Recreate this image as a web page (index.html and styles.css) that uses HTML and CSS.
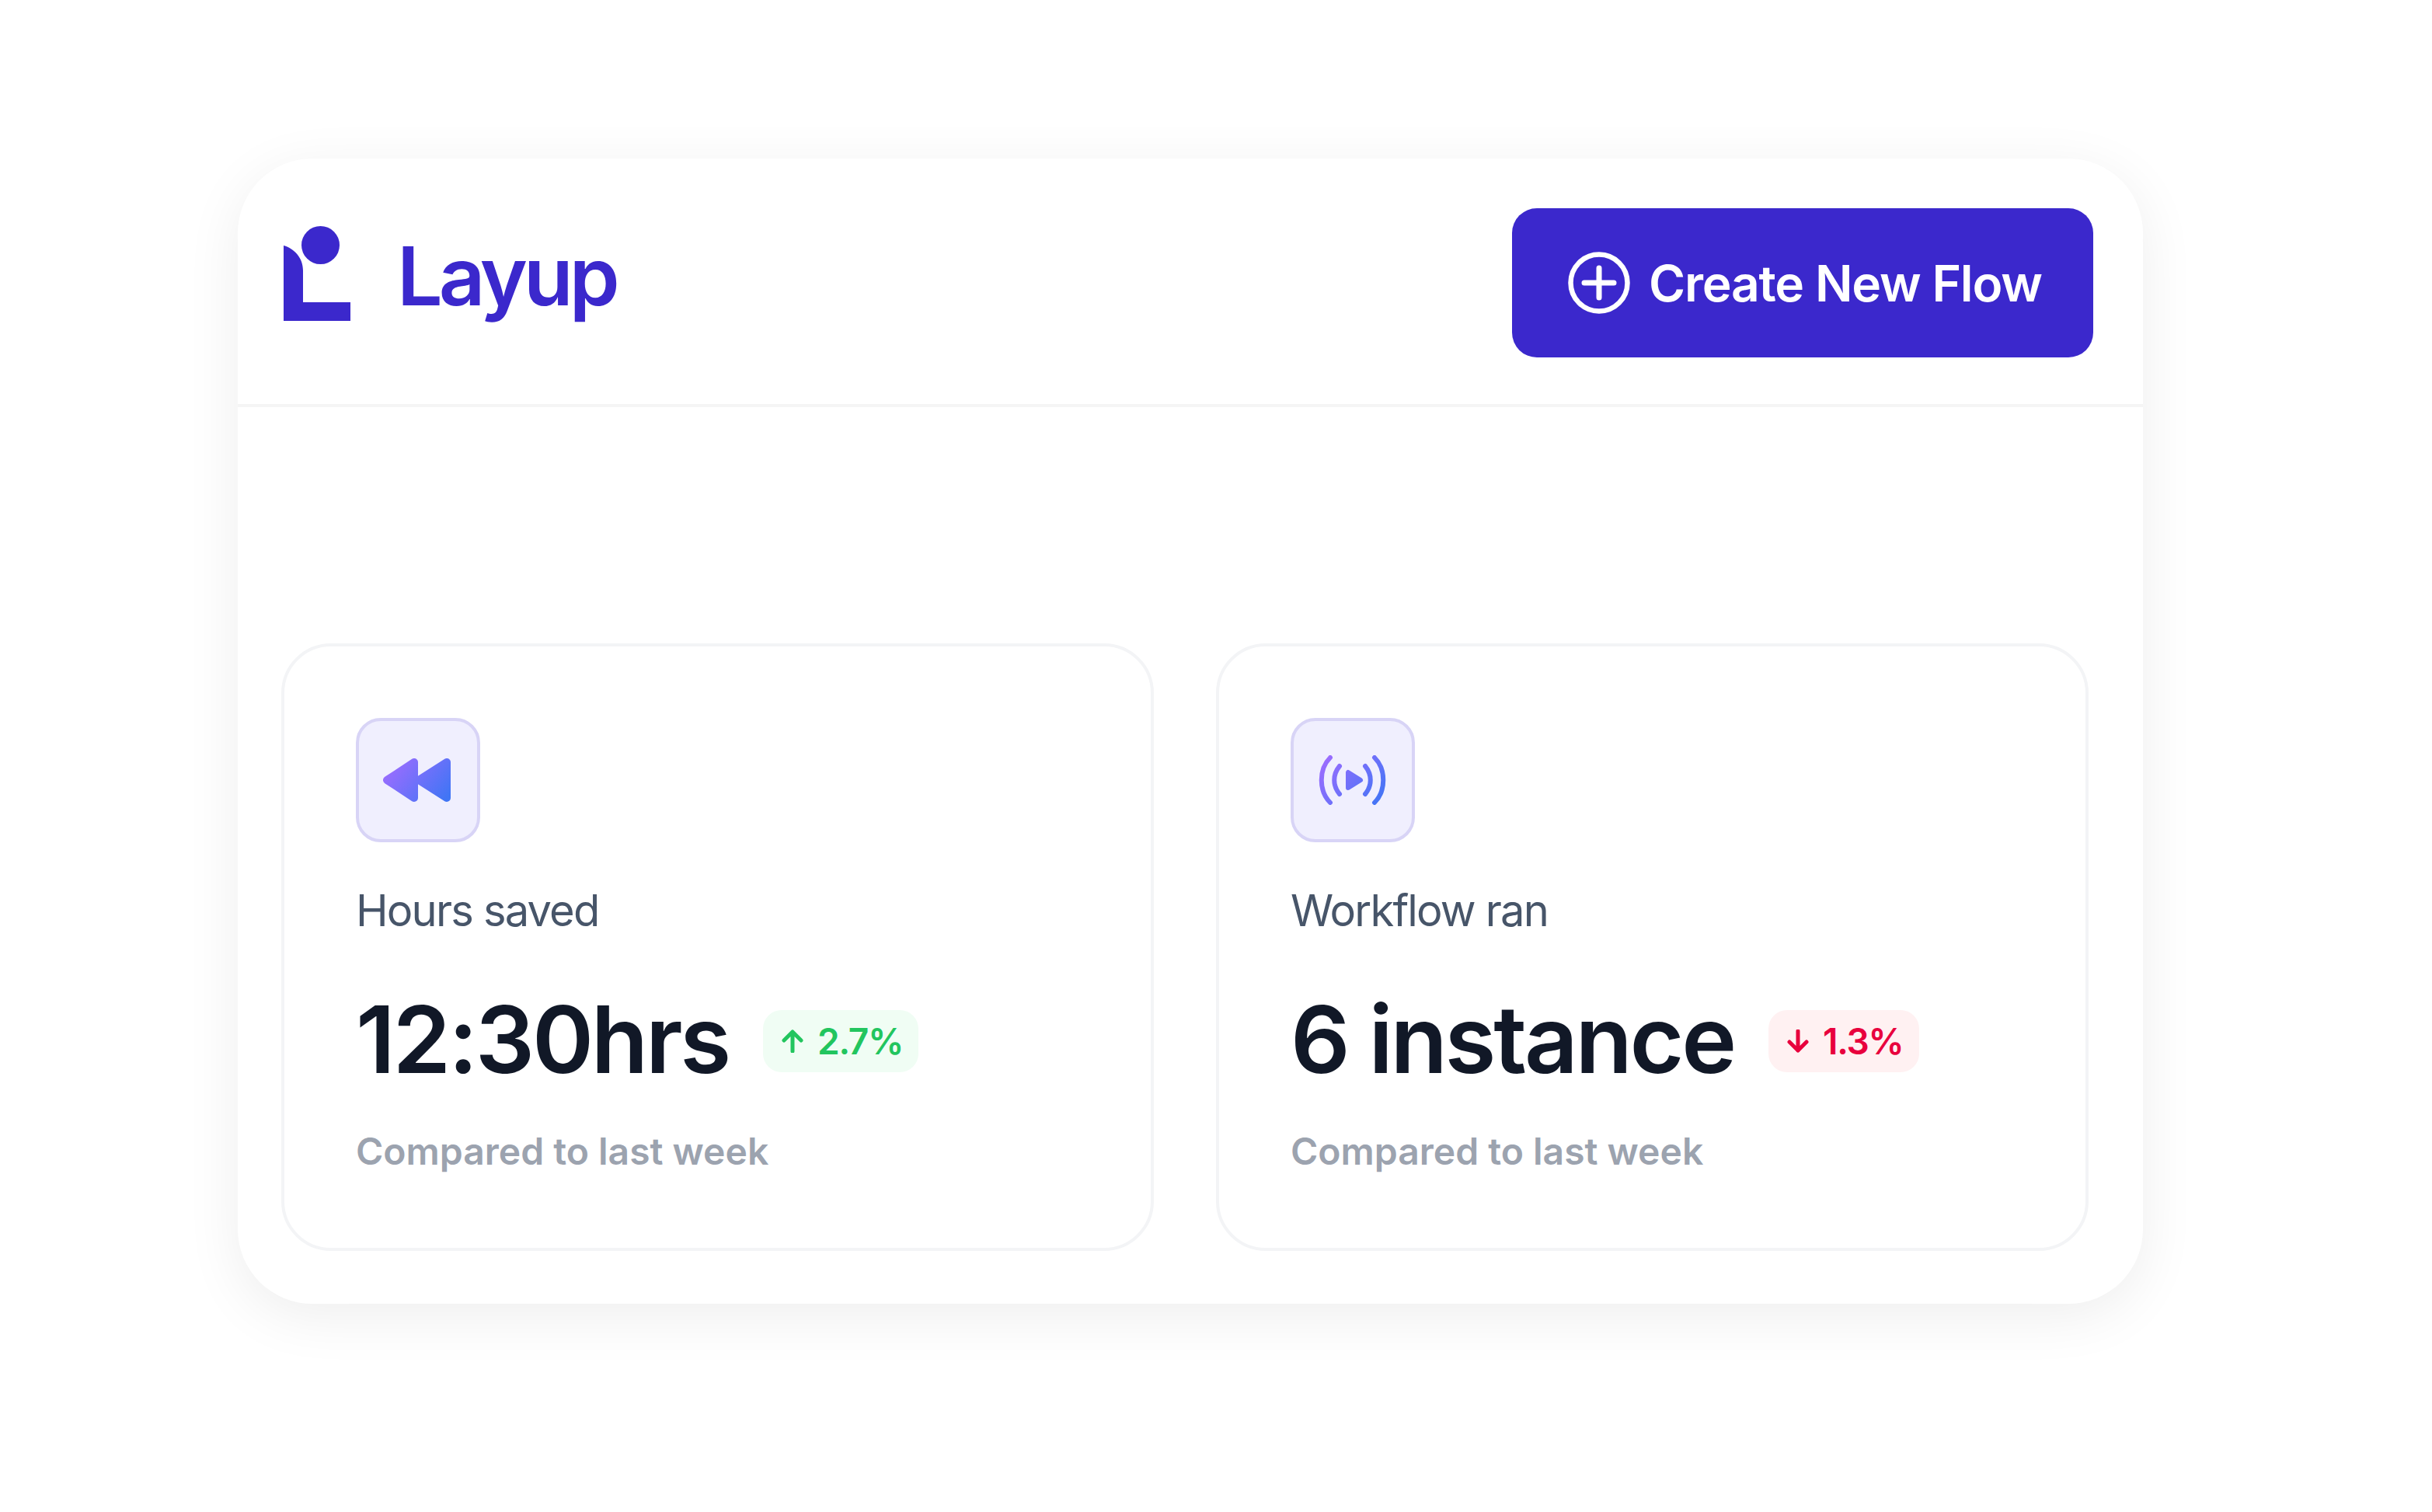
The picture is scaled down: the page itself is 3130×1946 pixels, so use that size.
FILE: index.html
```html
<!DOCTYPE html>
<html lang="en">

<head>
    <meta charset="UTF-8">
    <link rel="stylesheet" href="styles.css">
    <title>Layup</title>
</head>

<body>

    <div class="panel">
        <div class="panel-header">
            <div class="brand">
                <svg class="brand-logo" viewBox="0 0 86 122">
                    <path d="M0 25C14 29 25 41 25 57V98H86V122H0Z" fill="#3b28cc" />
                    <circle cx="47.5" cy="24.5" r="24.5" fill="#3b28cc" />
                </svg>
                <span class="brand-name">Layup</span>
            </div>
            <button class="create-btn">
                <svg class="create-icon" viewBox="0 0 80 80" fill="none" stroke="#fff">
                    <circle cx="40" cy="40" r="36.5" stroke-width="6.5" />
                    <path d="M40 21V59M21 40H59" stroke-width="7" stroke-linecap="round" />
                </svg>
                Create New Flow
            </button>
        </div>

        <div class="panel-body">
            <div class="stat-card">
                <div class="stat-icon">
                    <svg class="icon-rewind" viewBox="0 0 88 56">
                        <defs>
                            <linearGradient id="grad1" gradientUnits="userSpaceOnUse" x1="10" y1="0" x2="80" y2="56">
                                <stop offset="0" stop-color="#a06cff" />
                                <stop offset="1" stop-color="#4075f5" />
                            </linearGradient>
                        </defs>
                        <path d="M6 28L41 5V51ZM47 28L83 5V51Z" fill="url(#grad1)" stroke="url(#grad1)" stroke-width="10" stroke-linejoin="round" />
                    </svg>
                </div>
                <div class="stat-label">Hours saved</div>
                <div class="stat-row">
                    <span class="stat-value">12:30hrs</span>
                    <span class="badge badge-up">
                        <svg class="badge-arrow" viewBox="0 0 28 30" fill="none" stroke="#22c55e" stroke-width="5" stroke-linecap="round" stroke-linejoin="round">
                            <path d="M14 28V3M3 14L14 3L25 14" />
                        </svg>
                        2.7%
                    </span>
                </div>
                <div class="stat-note">Compared to last week</div>
            </div>

            <div class="stat-card">
                <div class="stat-icon">
                    <svg class="icon-live" viewBox="0 0 88 64" fill="none">
                        <defs>
                            <linearGradient id="grad2" gradientUnits="userSpaceOnUse" x1="6" y1="0" x2="80" y2="64">
                                <stop offset="0" stop-color="#a06cff" />
                                <stop offset="1" stop-color="#4075f5" />
                            </linearGradient>
                        </defs>
                        <path d="M15 3C0 18 0 46 15 61M72 3C87 18 87 46 72 61M27 14C18 25 18 39 27 50M60 14C69 25 69 39 60 50" stroke="url(#grad2)" stroke-width="6" stroke-linecap="round" />
                        <path d="M38 22V42L54 32Z" fill="url(#grad2)" stroke="url(#grad2)" stroke-width="6" stroke-linejoin="round" />
                    </svg>
                </div>
                <div class="stat-label">Workflow ran</div>
                <div class="stat-row">
                    <span class="stat-value">6 instance</span>
                    <span class="badge badge-down">
                        <svg class="badge-arrow" viewBox="0 0 28 30" fill="none" stroke="#e8003d" stroke-width="5" stroke-linecap="round" stroke-linejoin="round">
                            <path d="M14 2V27M3 16L14 27L25 16" />
                        </svg>
                        1.3%
                    </span>
                </div>
                <div class="stat-note">Compared to last week</div>
            </div>
        </div>
    </div>

</body>

</html>
```

FILE: styles.css
```css
body {
    font-family: 'Inter', sans-serif;
    background: #ffffff;
    margin: 0;
    padding: 204px 372px 268px 306px;
}

.panel {
    background: #ffffff;
    border-radius: 96px;
    box-shadow: 0 16px 72px rgba(0, 0, 0, 0.07);
}

.panel-header {
    display: flex;
    justify-content: space-between;
    align-items: flex-start;
    height: 316px;
    padding: 0 64px 0 59px;
    border-bottom: 4px solid #f5f5f5;
}

.brand {
    display: flex;
    align-items: flex-start;
    gap: 60px;
    margin-top: 87px;
}

.brand-logo {
    width: 86px;
    height: 122px;
}

.brand-name {
    margin-top: 3px;
    font-size: 104px;
    line-height: 122px;
    font-weight: 600;
    letter-spacing: -5px;
    color: #3b28cc;
}

.create-btn {
    display: flex;
    align-items: center;
    gap: 24px;
    width: 748px;
    height: 192px;
    margin-top: 64px;
    padding: 0 0 0 72px;
    border: none;
    border-radius: 32px;
    background-color: #3b28cc;
    color: #ffffff;
    font-family: inherit;
    font-size: 64px;
    font-weight: 600;
    letter-spacing: -1.2px;
}

.create-icon {
    width: 80px;
    height: 80px;
}

.panel-body {
    display: grid;
    grid-template-columns: 1fr 1fr;
    gap: 80px;
    padding: 304px 70px 68px 56px;
}

.stat-card {
    padding: 92px;
    border: 4px solid #f3f4f6;
    border-radius: 64px;
}

.stat-icon {
    display: flex;
    align-items: center;
    justify-content: center;
    box-sizing: border-box;
    width: 160px;
    height: 160px;
    border: 4px solid #d8d4f6;
    border-radius: 32px;
    background-color: #f0effe;
}

.icon-rewind {
    width: 88px;
    height: 56px;
    margin-right: 4px;
}

.icon-live {
    width: 88px;
    height: 64px;
}

.stat-label {
    margin-top: 56px;
    font-size: 56px;
    line-height: 64px;
    letter-spacing: -1.8px;
    color: #475569;
}

.stat-row {
    display: flex;
    align-items: center;
    gap: 44px;
    margin-top: 62px;
}

.stat-value {
    font-size: 120px;
    line-height: 144px;
    font-weight: 600;
    letter-spacing: -3.3px;
    color: #111827;
}

.badge {
    display: flex;
    align-items: center;
    gap: 18px;
    height: 80px;
    margin-top: 4px;
    padding: 0 20px 0 24px;
    border-radius: 24px;
    font-size: 46px;
    font-weight: 600;
    letter-spacing: -1.2px;
}

.badge-arrow {
    width: 28px;
    height: 30px;
}

.badge-up {
    background-color: #f0fdf4;
    color: #22c55e;
}

.badge-down {
    background-color: #fff1f2;
    color: #e8003d;
}

.stat-note {
    margin-top: 40px;
    font-size: 48px;
    line-height: 64px;
    font-weight: 600;
    color: #9ca3af;
}
```
